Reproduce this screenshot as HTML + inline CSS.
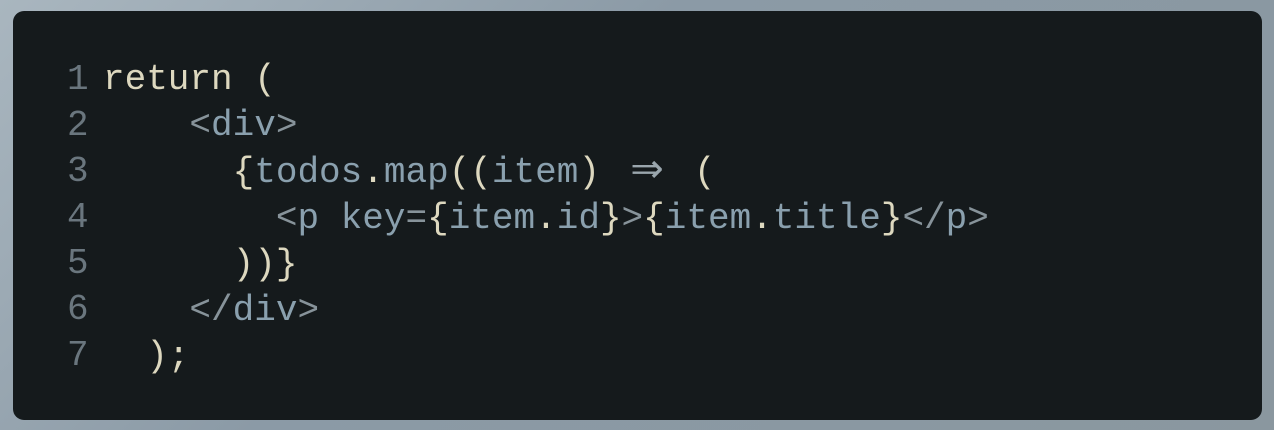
<!DOCTYPE html>
<html><head><style>
html,body{margin:0;padding:0;width:1274px;height:430px;overflow:hidden;background:linear-gradient(135deg,#a9b6bf,#8b9aa6 40%,#8a979f);}
.card{position:absolute;left:13px;top:11px;width:1249px;height:409px;background:#151a1c;border-radius:11px;}
pre{position:absolute;margin:0;top:46px;font-family:"Liberation Mono","DejaVu Sans Mono",monospace;font-size:36px;line-height:46px;}
.ln{color:#6a767e;}
.code{color:#8aa0ae;}
.c{color:#ddd8bf}
.g{color:#87939a}
.a{display:inline-block;width:2ch;text-align:center;color:#9aa6ad;font-family:"DejaVu Sans",sans-serif;font-size:40px;line-height:40px}
</style></head><body>
<div class="card">
<pre class="ln" style="left:54px">1
2
3
4
5
6
7</pre>
<pre class="code" style="left:90px"><span class="c">return (</span>
    <span class="g">&lt;</span>div<span class="g">&gt;</span>
      <span class="c">{</span>todos<span class="c">.</span>map<span class="c">((</span>item<span class="c">)</span> <span class="a">⇒</span> <span class="c">(</span>
        <span class="g">&lt;</span>p key<span class="g">=</span><span class="c">{</span>item<span class="c">.</span>id<span class="c">}</span><span class="g">&gt;</span><span class="c">{</span>item<span class="c">.</span>title<span class="c">}</span><span class="g">&lt;/</span>p<span class="g">&gt;</span>
      <span class="c">))}</span>
    <span class="g">&lt;/</span>div<span class="g">&gt;</span>
  <span class="c">);</span></pre>
</div>
</body></html>
